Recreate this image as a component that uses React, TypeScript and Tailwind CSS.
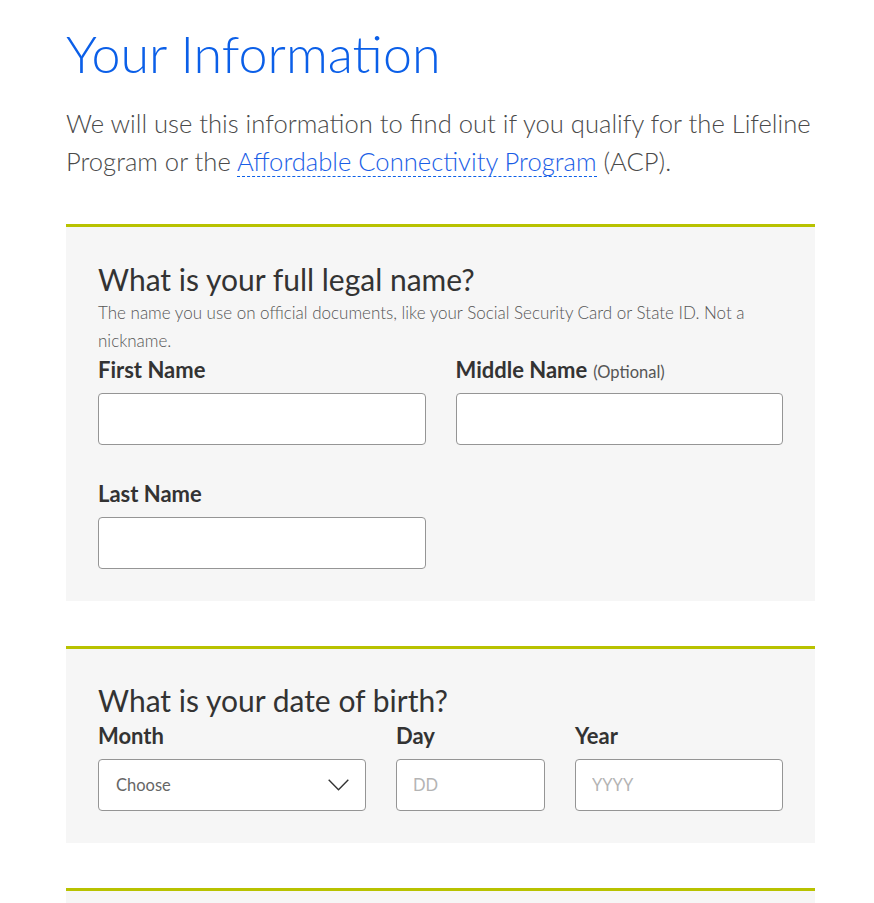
const font = { fontFamily: "Lato, 'Liberation Sans', sans-serif" };

function Label({ children }: { children: React.ReactNode }) {
  return <label className="block text-[22px] font-bold leading-[26px] text-[#333]">{children}</label>;
}

function Field({ label, optional }: { label: string; optional?: boolean }) {
  return (
    <div>
      <Label>
        {label}
        {optional && <span className="ml-1.5 text-[16.5px] font-normal leading-[20px] text-[#555]">(Optional)</span>}
      </Label>
      <input
        type="text"
        className="mt-[10px] block h-[52px] w-full rounded-[4px] border border-[#959595] bg-white px-[18px] text-[16px]"
      />
    </div>
  );
}

function SmallInput({ label, placeholder, width }: { label: string; placeholder: string; width: string }) {
  return (
    <div className={width}>
      <Label>{label}</Label>
      <input
        type="text"
        placeholder={placeholder}
        className="mt-[10px] block h-[52px] w-full rounded-[4px] border border-[#959595] bg-white px-[16px] text-[16.5px] placeholder:text-[#b4b4b4]"
      />
    </div>
  );
}

export default function App() {
  return (
    <div className="min-h-screen bg-white" style={font}>
      <div className="mx-[66px] w-[749px] pt-[21px]">
        <h1 className="text-[52px] font-light leading-[64px] text-[#0b5fe8]">Your Information</h1>
        <p className="mt-[19px] text-[25.6px] font-light leading-[38px] text-[#4a4a4a]">
          We will use this information to find out if you qualify for the Lifeline Program or the{" "}
          <a className="border-b border-dashed border-[#0b5fe8] text-[#1a5ee6]">Affordable Connectivity Program</a>{" "}
          (ACP).
        </p>

        <section className="mt-[44px] border-t-[3px] border-[#b8c200] bg-[#f6f6f6] px-[32px] pb-[32px] pt-[34px]">
          <h2 className="text-[30px] leading-[36px] text-[#333]">What is your full legal name?</h2>
          <p className="mt-[2px] text-[17px] font-light leading-[28px] text-[#555]">
            The name you use on official documents, like your Social Security Card or State ID. Not a nickname.
          </p>
          <div className="mt-[2px] grid grid-cols-2 gap-x-[30px] gap-y-[36px]">
            <Field label="First Name" />
            <Field label="Middle Name" optional />
            <Field label="Last Name" />
          </div>
        </section>

        <section className="mt-[45px] border-t-[3px] border-[#b8c200] bg-[#f6f6f6] px-[32px] pb-[32px] pt-[33px]">
          <h2 className="text-[30px] leading-[36px] text-[#333]">What is your date of birth?</h2>
          <div className="mt-[5px] flex gap-[30px]">
            <div className="w-[268px]">
              <Label>Month</Label>
              <div className="relative mt-[10px] flex h-[52px] items-center rounded-[4px] border border-[#959595] bg-white px-[17px]">
                <span className="text-[16.5px] text-[#666]">Choose</span>
                <svg className="absolute right-[16px]" width="21" height="12" viewBox="0 0 21 12" fill="none">
                  <polyline points="0.7,0.7 10.5,10.8 20.3,0.7" stroke="#333" strokeWidth="1.4" />
                </svg>
              </div>
            </div>
            <SmallInput label="Day" placeholder="DD" width="w-[149px]" />
            <SmallInput label="Year" placeholder="YYYY" width="w-[208px]" />
          </div>
        </section>

        <section className="mt-[45px] h-[40px] border-t-[3px] border-[#b8c200] bg-[#f6f6f6]" />
      </div>
    </div>
  );
}
